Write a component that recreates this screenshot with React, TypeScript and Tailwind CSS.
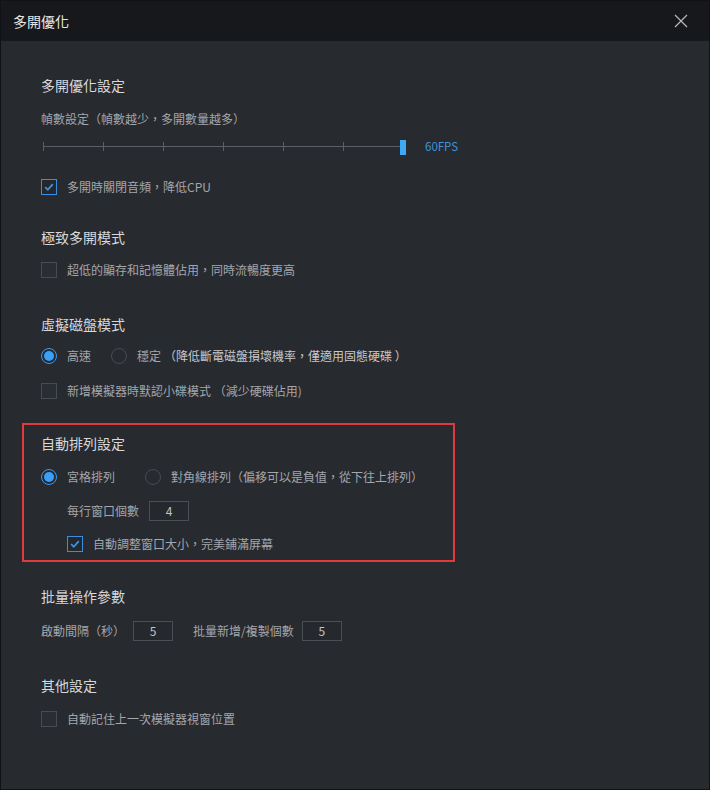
import React from "react";

const font = { fontFamily: '"Noto Sans CJK TC", "Noto Sans CJK SC", "Noto Sans", sans-serif' };

function Checkbox({ checked }: { checked?: boolean }) {
  return checked ? (
    <div className="w-4 h-4 shrink-0 border border-[#3a8ee0] bg-[#24272c] flex items-center justify-center">
      <svg width="12" height="12" viewBox="0 0 12 12">
        <path d="M2.2 6.2 L4.8 8.8 L9.8 3.2" fill="none" stroke="#3d93e6" strokeWidth="1.8" />
      </svg>
    </div>
  ) : (
    <div className="w-4 h-4 shrink-0 border border-[#474b52] bg-[#2a2d33]" />
  );
}

function Radio({ checked }: { checked?: boolean }) {
  return checked ? (
    <div className="w-4 h-4 shrink-0 rounded-full border border-[#3a9af0] flex items-center justify-center">
      <div className="w-[10px] h-[10px] rounded-full bg-[#3aa0f5]" />
    </div>
  ) : (
    <div className="w-4 h-4 shrink-0 rounded-full border border-[#474b52]" />
  );
}

function Header({ children }: { children: React.ReactNode }) {
  return <div className="h-5 flex items-center text-[14px] text-[#d6d8dc] leading-none whitespace-nowrap">{children}</div>;
}

function Row({ children, className = "" }: { children: React.ReactNode; className?: string }) {
  return <div className={`h-5 flex items-center text-[12px] leading-none text-[#a3a6ac] whitespace-nowrap ${className}`}>{children}</div>;
}

function NumBox({ value }: { value: string }) {
  return (
    <div className="w-10 h-5 border border-[#4a4e55] bg-[#25282d] flex items-center justify-center text-[12px] text-[#c2c4c8]">
      {value}
    </div>
  );
}

export default function App() {
  const ticks = [0, 60, 120, 180, 240, 300];
  return (
    <div style={font} className="w-[710px] h-[790px] border border-[#111215] bg-[#272a2f] flex flex-col overflow-hidden">
      <div className="h-10 shrink-0 bg-[#17181b] flex items-center justify-between pl-3 pr-[21px]">
        <span className="text-[14px] text-[#e6e6e6] leading-none">多開優化</span>
        <svg width="14" height="14" viewBox="0 0 14 14">
          <path d="M1 1 L13 13 M13 1 L1 13" stroke="#b8babd" strokeWidth="1.2" />
        </svg>
      </div>

      <div className="flex flex-col pl-[21px]">
        <div className="pl-[19px] flex flex-col">
          <div className="mt-[34px]"><Header>多開優化設定</Header></div>
          <Row className="mt-[14px] text-[#8b8e94]">幀數設定（幀數越少，多開數量越多）</Row>
          <div className="mt-2 h-5 flex items-center">
            <div className="relative w-[366px] h-5 ml-[2px]">
              <div className="absolute left-0 top-[9px] w-[360px] h-px bg-[#5b5e64]" />
              {ticks.map((t) => (
                <div key={t} className="absolute top-[5px] w-px h-[9px] bg-[#5b5e64]" style={{ left: t }} />
              ))}
              <div className="absolute left-[357px] top-[3px] w-[6px] h-[15px] bg-[#3fa9f5]" />
            </div>
            <span className="ml-[16px] text-[11.5px] text-[#3f93dc] leading-none">60FPS</span>
          </div>
          <Row className="mt-5 gap-[10px]"><Checkbox checked /><span>多開時關閉音頻，降低CPU</span></Row>

          <div className="mt-[30px]"><Header>極致多開模式</Header></div>
          <Row className="mt-[13px] gap-[10px]"><Checkbox /><span>超低的顯存和記憶體佔用，同時流暢度更高</span></Row>

          <div className="mt-[34px]"><Header>虛擬磁盤模式</Header></div>
          <Row className="mt-3">
            <Radio checked />
            <span className="ml-[10px]">高速</span>
            <span className="ml-5"><Radio /></span>
            <span className="ml-[10px]">穩定</span>
            <span className="ml-[3px] text-[#c6c8cc]">（降低斷電磁盤損壞機率，僅適用固態硬碟 ）</span>
          </Row>
          <Row className="mt-[15px] gap-[10px]"><Checkbox /><span>新增模擬器時默認小碟模式 （減少硬碟佔用)</span></Row>
        </div>

        <div className="mt-[22px] w-[433px] h-[139px] border-2 border-[#e03a3e] pl-[17px] pt-2 flex flex-col">
          <Header>自動排列設定</Header>
          <Row className="mt-[14px]">
            <Radio checked />
            <span className="ml-[10px]">宮格排列</span>
            <span className="ml-[30px]"><Radio /></span>
            <span className="ml-[10px]">對角線排列（偏移可以是負值，從下往上排列）</span>
          </Row>
          <Row className="mt-[14px] pl-[26px]">
            <span>每行窗口個數</span>
            <span className="ml-[10px]"><NumBox value="4" /></span>
          </Row>
          <Row className="mt-[13px] pl-[26px] gap-[10px]"><Checkbox checked /><span>自動調整窗口大小，完美鋪滿屏幕</span></Row>
        </div>

        <div className="pl-[19px] flex flex-col">
          <div className="mt-6"><Header>批量操作參數</Header></div>
          <Row className="mt-[15px]">
            <span>啟動間隔（秒）</span>
            <span className="ml-[8px]"><NumBox value="5" /></span>
            <span className="ml-5">批量新增/複製個數</span>
            <span className="ml-[8px]"><NumBox value="5" /></span>
          </Row>

          <div className="mt-[34px]"><Header>其他設定</Header></div>
          <Row className="mt-[14px] gap-[10px]"><Checkbox /><span>自動記住上一次模擬器視窗位置</span></Row>
        </div>
      </div>
    </div>
  );
}
